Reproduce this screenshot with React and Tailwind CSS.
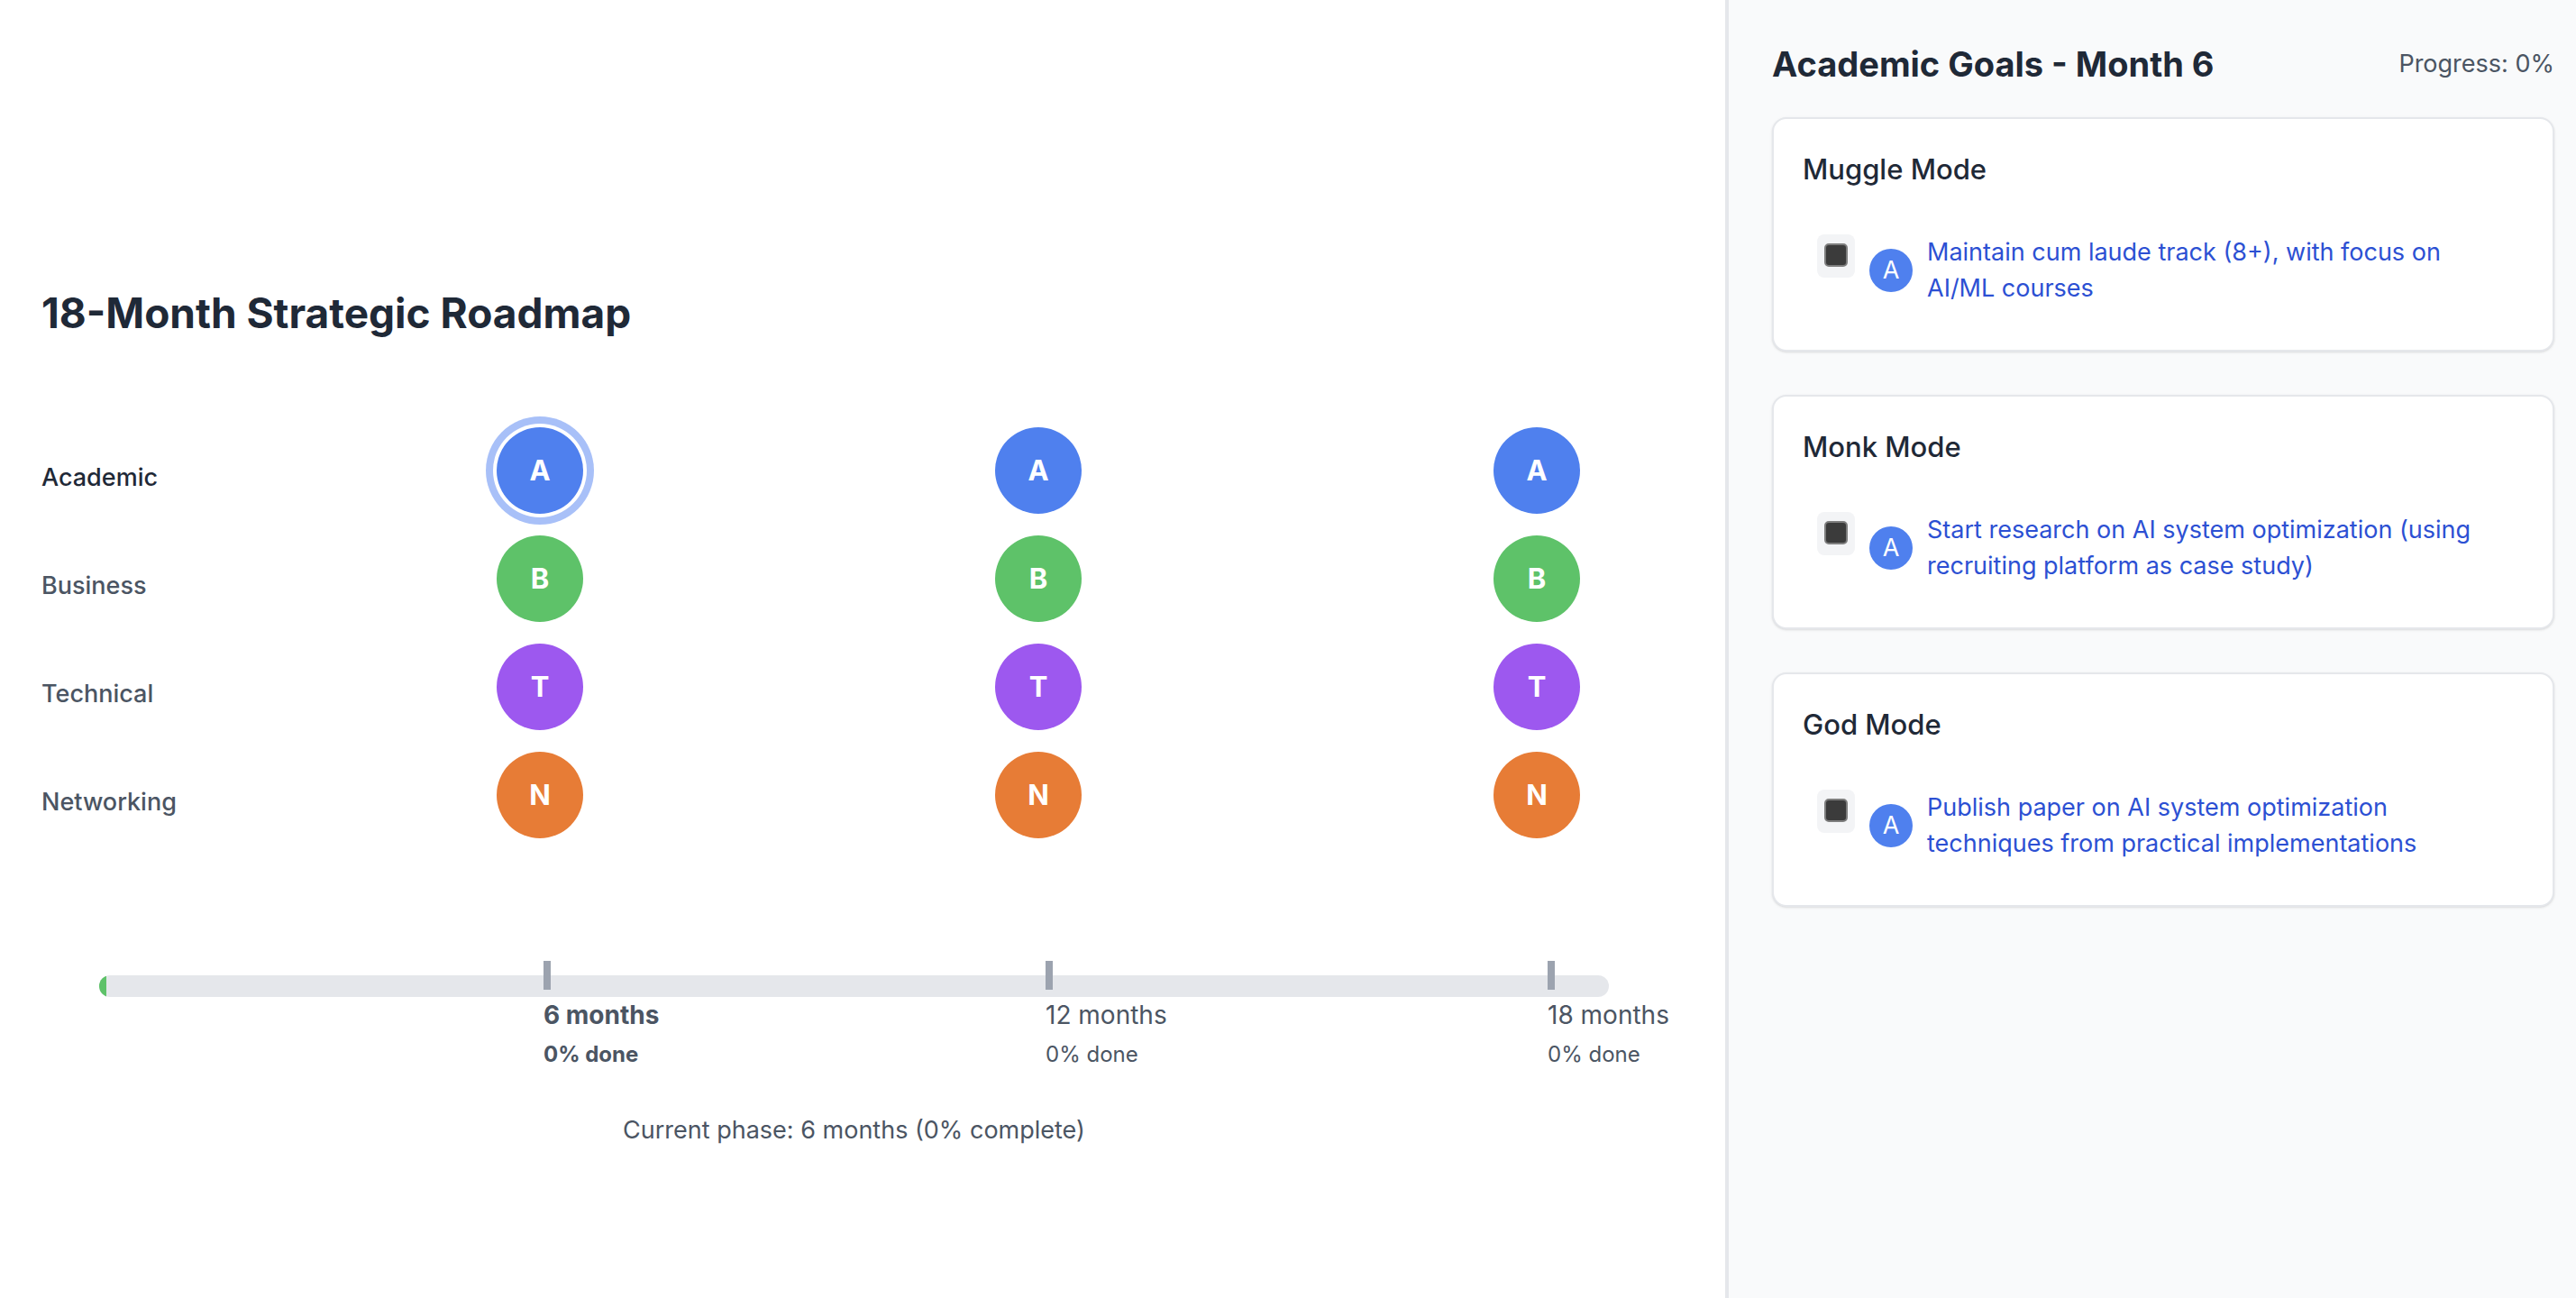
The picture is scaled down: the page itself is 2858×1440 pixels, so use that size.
const tracks = [
  { name: "Academic", letter: "A", color: "bg-[#4f80ee]" },
  { name: "Business", letter: "B", color: "bg-[#5ec269]" },
  { name: "Technical", letter: "T", color: "bg-[#9d58ef]" },
  { name: "Networking", letter: "N", color: "bg-[#e77c36]" },
];

const months = [6, 12, 18];

const modes = [
  { title: "Muggle Mode", goal: "Maintain cum laude track (8+), with focus on AI/ML courses" },
  { title: "Monk Mode", goal: "Start research on AI system optimization (using recruiting platform as case study)" },
  { title: "God Mode", goal: "Publish paper on AI system optimization techniques from practical implementations" },
];

function TrackRow({ track, active }) {
  return (
    <div className="grid grid-cols-[505fr_553fr_553fr_192fr] items-center">
      <span className={active ? "mt-4 font-medium text-[#1f2937]" : "mt-4 font-medium text-[#4b5563]"}>{track.name}</span>
      {months.map((month) => (
        <button
          key={month}
          type="button"
          aria-label={`${track.name}, month ${month}`}
          className={`flex size-24 items-center justify-center rounded-full text-[31px] font-bold text-white ${track.color} ${
            active && month === 6 ? "ring-8 ring-[#a8c0f8] ring-offset-4 ring-offset-white" : ""
          }`}
        >
          {track.letter}
        </button>
      ))}
    </div>
  );
}

function Timeline() {
  return (
    <div className="mt-[136px] grid">
      <div className="col-start-1 row-start-1 mx-16 mt-4 h-6 overflow-hidden rounded-full bg-gray-200">
        <div className="h-full w-2 bg-[#5ec269]" />
      </div>
      <div className="col-start-1 row-start-1 grid grid-cols-[1fr_1fr_1fr_132px]">
        {months.map((month) => (
          <div
            key={month}
            className={`whitespace-nowrap text-[#4b5563] ${month === 6 ? "col-start-2 font-bold" : ""}`}
          >
            <div className="h-8 w-2 bg-[#9ca3af]" />
            <div className="mt-2 text-[28px] leading-10">{month} months</div>
            <div className="mt-2 text-2xl leading-8">0% done</div>
          </div>
        ))}
      </div>
    </div>
  );
}

function GoalCard({ mode }) {
  return (
    <section className="rounded-2xl border-2 border-gray-200 bg-white p-8 shadow-sm">
      <h3 className="text-[31px] leading-12 font-medium text-[#1f2937]">{mode.title}</h3>
      <label className="mt-8 flex items-start gap-4 p-4">
        <span className="h-12 shrink-0 rounded-lg bg-gray-100 px-2 pt-[10px]">
          <input
            type="checkbox"
            className="block size-[26px] appearance-none rounded-[5px] border-2 border-[#7e7e7e] bg-[#3b3b3b]"
          />
        </span>
        <span className="flex size-12 shrink-0 items-center justify-center self-center rounded-full bg-[#4f80ee] text-white">
          A
        </span>
        <span className="text-[#2c50d3]">{mode.goal}</span>
      </label>
    </section>
  );
}

export default function App() {
  return (
    <div className="grid min-h-screen grid-cols-[1914fr_944fr] bg-white font-['Inter',sans-serif] text-[27px] leading-10">
      <main className="pt-[315px] pr-[65px] pl-[46px]">
        <h1 className="text-[46px] leading-16 font-bold text-[#1f2937]">18-Month Strategic Roadmap</h1>
        <div className="mt-[95px] flex flex-col gap-6">
          {tracks.map((track) => (
            <TrackRow key={track.name} track={track} active={track.name === "Academic"} />
          ))}
        </div>
        <Timeline />
        <p className="mt-12 text-center text-[#4b5563]">Current phase: 6 months (0% complete)</p>
      </main>
      <aside className="border-l-4 border-gray-200 bg-gray-50 pt-[43px] pr-6 pl-12">
        <header className="mb-[31px] flex items-center justify-between">
          <h2 className="text-[38px] leading-14 font-bold text-[#1f2937]">Academic Goals - Month 6</h2>
          <span className="text-[#4b5563]">Progress: 0%</span>
        </header>
        <div className="flex flex-col gap-12">
          {modes.map((mode) => (
            <GoalCard key={mode.title} mode={mode} />
          ))}
        </div>
      </aside>
    </div>
  );
}
